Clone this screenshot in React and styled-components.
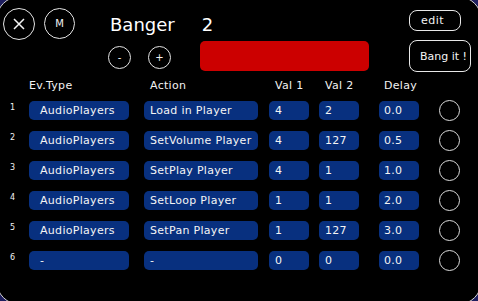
import React from "react";
import styled, { createGlobalStyle } from "styled-components";

const GlobalStyle = createGlobalStyle`
  html, body {
    margin: 0;
    padding: 0;
    width: 478px;
    height: 301px;
    overflow: hidden;
    background: #1e1e5e;
  }
  * { box-sizing: border-box; }
`;

const Panel = styled.div`
  width: 486px;
  height: 309px;
  margin: -4px;
  background: #000;
  border: 1px solid #d4d4d4;
  border-radius: 24px;
  padding: 11px 0 0 6px;
  font-family: "DejaVu Sans", "Liberation Sans", sans-serif;
  color: #f2f2f2;
  display: flex;
  flex-direction: column;
`;

const TopBar = styled.div`
  display: flex;
  align-items: flex-start;
  height: 72px;
`;

const LeftButtons = styled.div`
  display: flex;
  gap: 9px;
`;

const RoundButton = styled.div`
  width: ${(p) => p.$size}px;
  height: ${(p) => p.$size}px;
  border-radius: 50%;
  border: 1.5px solid #e4e4e4;
  display: flex;
  align-items: center;
  justify-content: center;
  font-size: ${(p) => p.$font || 10}px;
  line-height: 1;
  color: #f4f4f4;
  flex: none;
`;

const CenterBlock = styled.div`
  margin-left: 33px;
  display: flex;
  flex-direction: column;
`;

const TitleRow = styled.div`
  margin-top: 6px;
  padding-left: 2px;
  display: flex;
  gap: 27px;
  font-size: 18px;
  line-height: 22px;
  color: #ffffff;
`;

const ControlRow = styled.div`
  margin-top: 5px;
  display: flex;
  align-items: center;
`;

const SmallGroup = styled.div`
  display: flex;
  gap: 17px;
  margin-top: 3px;
`;

const RedBar = styled.div`
  margin-left: 29px;
  width: 169px;
  height: 30px;
  border-radius: 5px;
  background: #cc0000;
`;

const RightColumn = styled.div`
  margin-left: 40px;
  margin-top: 2px;
  display: flex;
  flex-direction: column;
  align-items: flex-start;
  gap: 9px;
`;

const OutlineButton = styled.div`
  width: ${(p) => p.$w}px;
  height: ${(p) => p.$h}px;
  border: 1px solid #e8e8e8;
  border-radius: 8px;
  display: flex;
  align-items: center;
  justify-content: flex-start;
  padding-left: ${(p) => p.$pl || 0}px;
  font-size: 11px;
  letter-spacing: ${(p) => p.$ls || 0}px;
  white-space: nowrap;
  color: #f4f4f4;
`;

const Table = styled.div`
  margin-left: 6px;
  display: grid;
  grid-template-columns: 20px 115px 125px 50px 60px 60px 21px;
  grid-template-rows: 10px repeat(6, 19px);
  row-gap: 11px;
  font-size: 11px;
  letter-spacing: 0.3px;
`;

const HeaderCell = styled.div`
  line-height: 11px;
  padding-left: ${(p) => p.$pl || 0}px;
  white-space: nowrap;
`;

const RowNumber = styled.div`
  font-size: 8px;
  line-height: 8px;
  margin-top: 3px;
  padding-left: 1px;
`;

const Pill = styled.div`
  width: ${(p) => p.$w}px;
  height: 19px;
  border-radius: 5px;
  background: #08307f;
  padding-left: ${(p) => p.$pl}px;
  line-height: 19px;
  white-space: nowrap;
  overflow: hidden;
  color: #f4f4f4;
`;

const Toggle = styled.div`
  width: 21px;
  height: 21px;
  border-radius: 50%;
  border: 1.5px solid #dcdcdc;
  align-self: center;
`;

const rows = [
  ["AudioPlayers", "Load in Player", "4", "2", "0.0"],
  ["AudioPlayers", "SetVolume Player", "4", "127", "0.5"],
  ["AudioPlayers", "SetPlay Player", "4", "1", "1.0"],
  ["AudioPlayers", "SetLoop Player", "1", "1", "2.0"],
  ["AudioPlayers", "SetPan Player", "1", "127", "3.0"],
  ["-", "-", "0", "0", "0.0"],
];

const CloseIcon = () => (
  <svg width="12" height="12" viewBox="0 0 12 12">
    <path d="M1 1 L11 11 M11 1 L1 11" stroke="#f4f4f4" strokeWidth="1.5" fill="none" />
  </svg>
);

export default function App() {
  return (
    <>
      <GlobalStyle />
      <Panel>
        <TopBar>
          <LeftButtons>
            <RoundButton $size={32}>
              <CloseIcon />
            </RoundButton>
            <RoundButton $size={31}>M</RoundButton>
          </LeftButtons>
          <CenterBlock>
            <TitleRow>
              <span>Banger</span>
              <span>2</span>
            </TitleRow>
            <ControlRow>
              <SmallGroup>
                <RoundButton $size={23}>-</RoundButton>
                <RoundButton $size={23}>+</RoundButton>
              </SmallGroup>
              <RedBar />
            </ControlRow>
          </CenterBlock>
          <RightColumn>
            <OutlineButton $w={52} $h={21} $pl={11} $ls={0.5}>
              edit
            </OutlineButton>
            <OutlineButton $w={62} $h={32} $pl={10}>
              Bang it !
            </OutlineButton>
          </RightColumn>
        </TopBar>
        <Table>
          <div />
          <HeaderCell>Ev.Type</HeaderCell>
          <HeaderCell $pl={6}>Action</HeaderCell>
          <HeaderCell $pl={6}>Val 1</HeaderCell>
          <HeaderCell $pl={6}>Val 2</HeaderCell>
          <HeaderCell $pl={5}>Delay</HeaderCell>
          <div />
          {rows.map((r, i) => (
            <React.Fragment key={i}>
              <RowNumber>{i + 1}</RowNumber>
              <Pill $w={100} $pl={11}>{r[0]}</Pill>
              <Pill $w={114} $pl={6}>{r[1]}</Pill>
              <Pill $w={40} $pl={6}>{r[2]}</Pill>
              <Pill $w={40} $pl={6}>{r[3]}</Pill>
              <Pill $w={40} $pl={5}>{r[4]}</Pill>
              <Toggle />
            </React.Fragment>
          ))}
        </Table>
      </Panel>
    </>
  );
}
